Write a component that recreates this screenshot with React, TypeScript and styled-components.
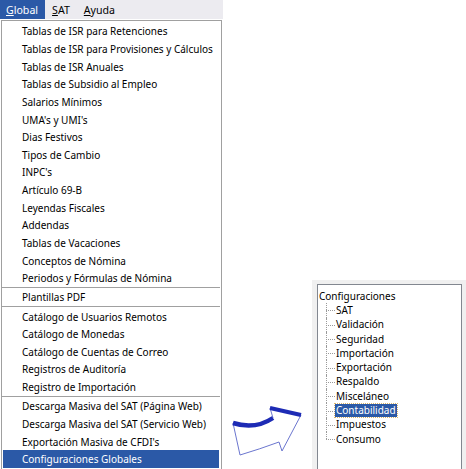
import React from "react";
import styled, { createGlobalStyle } from "styled-components";

const GlobalStyle = createGlobalStyle`
  html, body { margin: 0; padding: 0; background: #ffffff; }
  body { font-family: "Noto Sans", "Open Sans", sans-serif; }
`;

const FONT = `"Noto Sans", "Open Sans", sans-serif`;

const Page = styled.div`
  width: 466px;
  height: 469px;
  display: flex;
  overflow: hidden;
  background: #ffffff;
  font-family: ${FONT};
  font-size: 10px;
  color: #000;
`;

const LeftColumn = styled.div`
  width: 222px;
  display: flex;
  flex-direction: column;
`;

const MenuBar = styled.div`
  height: 19px;
  width: 223px;
  background: #ecebf0;
  display: flex;
  align-items: stretch;
`;

const MenuBarItem = styled.div<{ $active?: boolean }>`
  display: flex;
  align-items: center;
  padding: 0 7px 0 ${(p) => (p.$active ? "6px" : "7px")};
  background: ${(p) => (p.$active ? "#2b59a7" : "transparent")};
  color: ${(p) => (p.$active ? "#ffffff" : "#000000")};
  font-size: 10.6px;
  u { text-decoration: underline; text-underline-offset: 1px; }
`;

const Dropdown = styled.div`
  margin: 1px 0 0 1px;
  flex: 1;
  border: 1px solid #a0a0a0;
  border-bottom: none;
  background: #ffffff;
  padding: 1.5px 2px 0 1px;
  display: flex;
  flex-direction: column;
`;

const MenuItem = styled.div<{ $selected?: boolean }>`
  height: 17.65px;
  display: flex;
  align-items: center;
  padding-left: 19px;
  white-space: nowrap;
  background: ${(p) => (p.$selected ? "#2b59a7" : "transparent")};
  color: ${(p) => (p.$selected ? "#ffffff" : "#000000")};
`;

const Separator = styled.div`
  height: 1.5px;
  border-top: 1px solid #a0a0a0;
  box-sizing: border-box;
  margin: 0 -1px;
`;

const ArrowSlot = styled.div`
  flex: 1;
  display: flex;
  align-items: flex-end;
  padding-bottom: 10px;
`;

const TreePanel = styled.div`
  width: 154px;
  height: 189px;
  align-self: flex-end;
  box-sizing: border-box;
  background: #f0f0f0;
  padding: 4px 4px 0 5px;
  display: flex;
`;

const TreeBox = styled.div`
  flex: 1;
  background: #ffffff;
  border: 1px solid #828790;
  border-bottom: none;
  padding: 4px 0 0 1px;
`;

const TreeRoot = styled.div`
  height: 14.3px;
  display: flex;
  align-items: center;
`;

const TreeChildren = styled.div`
  margin-left: 7px;
`;

const TreeRow = styled.div<{ $last?: boolean }>`
  position: relative;
  height: 14.3px;
  display: flex;
  align-items: center;
  padding-left: 9px;
  &::before {
    content: "";
    position: absolute;
    left: 0;
    top: 50%;
    width: 9px;
    border-top: 1px dotted #9a9a9a;
  }
  &::after {
    content: "";
    position: absolute;
    left: 0;
    top: 0;
    height: ${(p) => (p.$last ? "50%" : "100%")};
    border-left: 1px dotted #9a9a9a;
  }
`;

const TreeLabel = styled.span<{ $selected?: boolean }>`
  padding: 0 1px;
  line-height: 13px;
  background: ${(p) => (p.$selected ? "#2b59a7" : "transparent")};
  color: ${(p) => (p.$selected ? "#ffffff" : "#000000")};
  outline: ${(p) => (p.$selected ? "1px dotted #d8b46a" : "none")};
`;

const menuGroups: string[][] = [
  [
    "Tablas de ISR para Retenciones",
    "Tablas de ISR para Provisiones y Cálculos",
    "Tablas de ISR Anuales",
    "Tablas de Subsidio al Empleo",
    "Salarios Mínimos",
    "UMA's y UMI's",
    "Dias Festivos",
    "Tipos de Cambio",
    "INPC's",
    "Artículo 69-B",
    "Leyendas Fiscales",
    "Addendas",
    "Tablas de Vacaciones",
    "Conceptos de Nómina",
    "Periodos y Fórmulas de Nómina",
  ],
  ["Plantillas PDF"],
  [
    "Catálogo de Usuarios Remotos",
    "Catálogo de Monedas",
    "Catálogo de Cuentas de Correo",
    "Registros de Auditoría",
    "Registro de Importación",
  ],
  [
    "Descarga Masiva del SAT (Página Web)",
    "Descarga Masiva del SAT (Servicio Web)",
    "Exportación Masiva de CFDI's",
    "Configuraciones Globales",
  ],
];

const treeChildren = [
  "SAT",
  "Validación",
  "Seguridad",
  "Importación",
  "Exportación",
  "Respaldo",
  "Misceláneo",
  "Contabilidad",
  "Impuestos",
  "Consumo",
];

const CurvedArrow = () => (
  <svg width="90" height="60" viewBox="222 400 90 60">
    <path
      d="M233 424 Q255 431 273 419 L270 409 L301 416 L282 452 L279 443 Q260 450 240 456 Z"
      fill="#ffffff"
      stroke="#6b76cf"
      strokeWidth="1"
      strokeLinejoin="round"
    />
    <path d="M233 424 Q255 431 273 419" fill="none" stroke="#1d2bb5" strokeWidth="4.5" />
    <path d="M270 409 L301 416" fill="none" stroke="#1d2bb5" strokeWidth="4" />
  </svg>
);

export default function App() {
  return (
    <>
      <GlobalStyle />
      <Page>
        <LeftColumn>
          <MenuBar>
            <MenuBarItem $active>
              <span>
                <u>G</u>lobal
              </span>
            </MenuBarItem>
            <MenuBarItem>
              <span>
                <u>S</u>AT
              </span>
            </MenuBarItem>
            <MenuBarItem>
              <span>
                <u>A</u>yuda
              </span>
            </MenuBarItem>
          </MenuBar>
          <Dropdown>
            {menuGroups.map((group, gi) => (
              <React.Fragment key={gi}>
                {gi > 0 && <Separator />}
                {group.map((label) => (
                  <MenuItem key={label} $selected={label === "Configuraciones Globales"}>
                    {label}
                  </MenuItem>
                ))}
              </React.Fragment>
            ))}
          </Dropdown>
        </LeftColumn>
        <ArrowSlot>
          <CurvedArrow />
        </ArrowSlot>
        <TreePanel>
          <TreeBox>
            <TreeRoot>Configuraciones</TreeRoot>
            <TreeChildren>
              {treeChildren.map((c, i) => (
                <TreeRow key={c} $last={i === treeChildren.length - 1}>
                  <TreeLabel $selected={c === "Contabilidad"}>{c}</TreeLabel>
                </TreeRow>
              ))}
            </TreeChildren>
          </TreeBox>
        </TreePanel>
      </Page>
    </>
  );
}
